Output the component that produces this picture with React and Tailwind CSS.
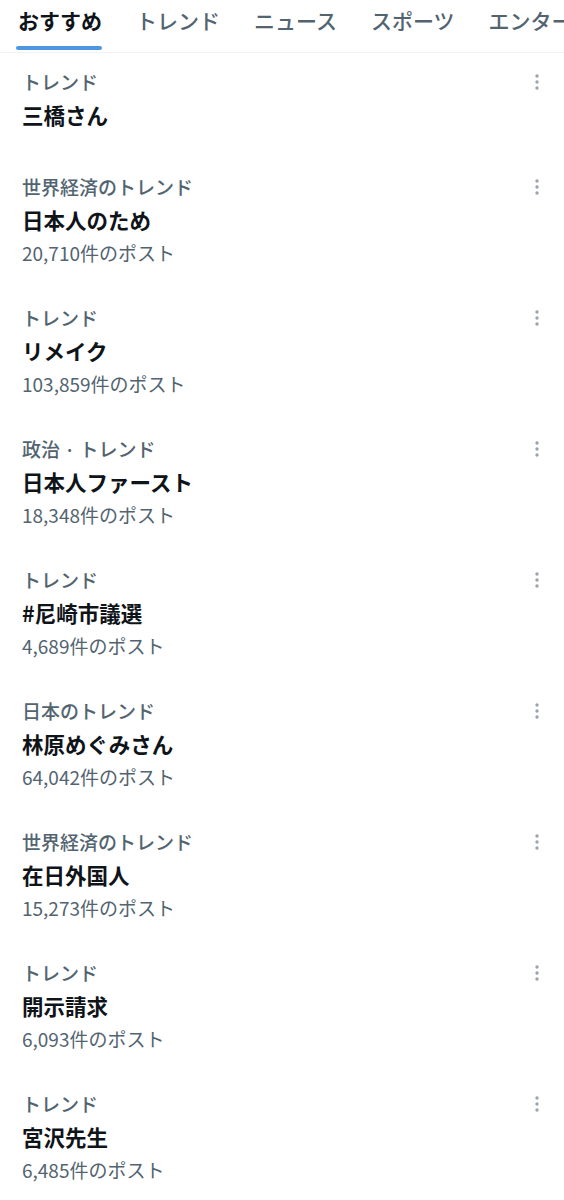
import React from 'react';

const tabs = ['おすすめ', 'トレンド', 'ニュース', 'スポーツ', 'エンターテイメント'];

const trends = [
  { category: 'トレンド', title: '三橋さん' },
  { category: '世界経済のトレンド', title: '日本人のため', count: '20,710件のポスト' },
  { category: 'トレンド', title: 'リメイク', count: '103,859件のポスト' },
  { category: '政治 · トレンド', title: '日本人ファースト', count: '18,348件のポスト' },
  { category: 'トレンド', title: '#尼崎市議選', count: '4,689件のポスト' },
  { category: '日本のトレンド', title: '林原めぐみさん', count: '64,042件のポスト' },
  { category: '世界経済のトレンド', title: '在日外国人', count: '15,273件のポスト' },
  { category: 'トレンド', title: '開示請求', count: '6,093件のポスト' },
  { category: 'トレンド', title: '宮沢先生', count: '6,485件のポスト' }
];

const MoreIcon = () => (
  <svg width="6" height="18" viewBox="0 0 6 18" className="text-[#9aa4ad]">
    <circle cx="3" cy="3" r="1.7" fill="currentColor" />
    <circle cx="3" cy="9" r="1.7" fill="currentColor" />
    <circle cx="3" cy="15" r="1.7" fill="currentColor" />
  </svg>
);

const TrendItem = ({ item }) => (
  <div className={`flex pl-[22px] pr-[24px] pt-[15px] ${item.count ? 'pb-[22px]' : 'pb-[29px]'}`}>
    <div className="flex-1 min-w-0">
      <div className="text-[19px] leading-[28px] font-medium text-[#536471]">{item.category}</div>
      <div className="mt-[5px] text-[21.5px] leading-[28px] font-bold text-[#0f1419]">{item.title}</div>
      {item.count && (
        <div className="mt-[5px] text-[19px] leading-[28px] text-[#536471]">{item.count}</div>
      )}
    </div>
    <div className="flex h-[28px] items-center">
      <MoreIcon />
    </div>
  </div>
);

export default function App() {
  return (
    <div
      className="w-[564px] h-[1200px] overflow-hidden bg-white"
      style={{ fontFamily: '"Noto Sans CJK JP", "Noto Sans", sans-serif' }}
    >
      {/* Tabs */}
      <div className="flex h-[53px] gap-[34px] overflow-hidden whitespace-nowrap border-b border-[#eff3f4] pl-[18px]">
        {tabs.map((tab, i) => (
          <div key={tab} className="relative flex h-full shrink-0 pt-[5px]">
            <span
              className={`text-[21px] leading-[30px] ${
                i === 0 ? 'font-bold text-[#0f1419]' : 'font-medium text-[#536471]'
              }`}
            >
              {tab}
            </span>
            {i === 0 && (
              <div className="absolute bottom-[2px] left-[-2px] right-0 h-[4px] rounded-full bg-[#4f95df]" />
            )}
          </div>
        ))}
      </div>

      {/* Trend list */}
      <div>
        {trends.map((item, i) => (
          <TrendItem key={i} item={item} />
        ))}
      </div>
    </div>
  );
}
